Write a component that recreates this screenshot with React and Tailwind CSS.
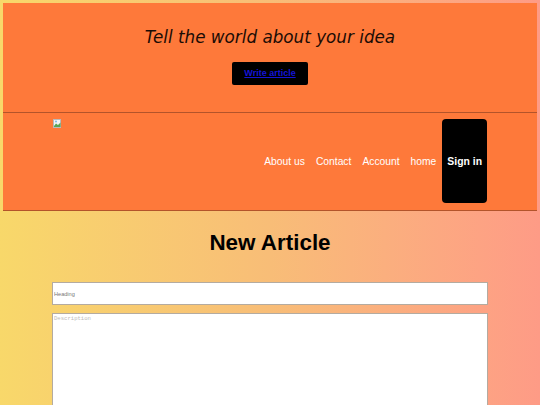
import React from 'react';

const BrokenImage = () => (
  <svg width="9" height="9" viewBox="0 0 9 9" aria-hidden="true">
    <rect x="0.5" y="0.5" width="7" height="8" fill="#f4f4f4" stroke="#b9b9b9" />
    <path d="M1 7 L3 4.5 L5 6 L7.5 3.5 L7.5 8 L1 8 Z" fill="#5aa457" />
    <circle cx="3" cy="2.5" r="1" fill="#7cb7e8" />
  </svg>
);

const NewArticlePage = () => {
  const links = ['About us', 'Contact', 'Account', 'home'];

  return (
    <div className="min-h-screen bg-linear-to-r from-[#f8d86a] via-[#f8bd77] to-[#fe9b86] p-[3px] font-['Liberation_Sans',Arial,sans-serif]">
      {/* hero */}
      <div className="h-[110px] bg-[#fe793a] border-b border-[#b3542a] flex flex-col items-center pt-[24px]">
        <p className="italic text-[16.8px] leading-[20px] text-[#1b0c05] font-['DejaVu_Sans',sans-serif]">
          Tell the world about your idea
        </p>
        <div className="mt-[15px] w-[76px] h-[23px] bg-black rounded-[2px] flex items-center justify-center">
          <a href="#" className="text-[9px] font-bold text-[#1414d8] underline">Write article</a>
        </div>
      </div>

      {/* nav */}
      <nav className="h-[98px] bg-[#fe793a] border-b border-[#b3542a] flex justify-between px-[50px] pt-[6px]">
        <div>
          <BrokenImage />
        </div>
        <div className="flex items-start">
          <div className="h-[84px] flex items-center gap-[11px] mr-[6px] pt-[2px]">
            {links.map((l) => (
              <a key={l} href="#" className="text-[10.3px] text-white">{l}</a>
            ))}
          </div>
          <button className="h-[84px] bg-black rounded-[4px] px-[5px] pt-[2px] text-[10.4px] font-bold text-white">
            Sign in
          </button>
        </div>
      </nav>

      {/* form */}
      <div className="flex flex-col items-center pt-[19px]">
        <h1 className="text-[22.4px] leading-[26px] font-bold text-black">New Article</h1>
        <input
          type="text"
          placeholder="Heading"
          className="mt-[26px] w-[436px] h-[23px] bg-white border border-[#b4aba0] px-[1px] text-[5.6px] placeholder:text-[#777] outline-none"
        />
        <textarea
          placeholder="Description"
          className="mt-[8px] w-[436px] h-[150px] bg-white border border-[#b4aba0] px-[1px] py-[1px] text-[5.6px] font-['Liberation_Mono',monospace] placeholder:text-[#bbb] resize-none outline-none"
        />
      </div>
    </div>
  );
};

export default NewArticlePage;
